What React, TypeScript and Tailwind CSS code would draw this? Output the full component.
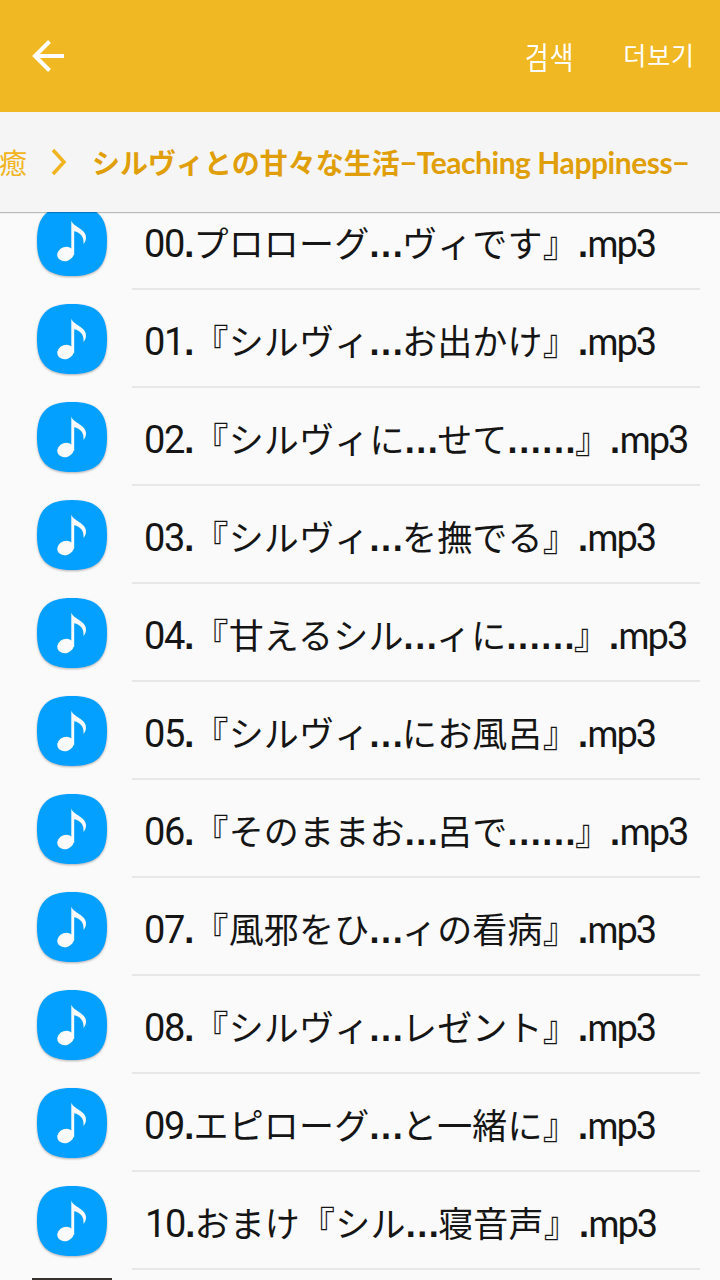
const FILES = [
  '00.プロローグ...ヴィです』.mp3',
  '01.『シルヴィ...お出かけ』.mp3',
  '02.『シルヴィに...せて......』.mp3',
  '03.『シルヴィ...を撫でる』.mp3',
  '04.『甘えるシル...ィに......』.mp3',
  '05.『シルヴィ...にお風呂』.mp3',
  '06.『そのままお...呂で......』.mp3',
  '07.『風邪をひ...ィの看病』.mp3',
  '08.『シルヴィ...レゼント』.mp3',
  '09.エピローグ...と一緒に』.mp3',
  '10.おまけ『シル...寝音声』.mp3',
]

// each kind of glyph gets its own face and tracking
function runClass(run: string) {
  if (/^1/.test(run)) return "ml-px font-['Roboto'] text-[38px] tracking-[-1.3px]"
  if (/^\d/.test(run)) return "font-['Roboto'] text-[38px] tracking-[-1.3px]"
  if (/^\./.test(run)) return "-mr-[2.3px] font-['Liberation_Sans'] font-bold text-[36px] tracking-[1.6px]"
  if (/^[a-z]/.test(run)) return "font-['Lato'] text-[38px] tracking-[-2px]"
  return "font-['Noto_Sans_CJK_JP'] text-[35px] tracking-[0.2px]"
}

function FileName({ name }: { name: string }) {
  const runs = name.match(/\d+|\.+|[a-z]+|[^\d.a-z]+/g) ?? []
  return (
    <p className="flex items-baseline whitespace-pre leading-none text-[#151515]">
      {runs.map((run, i) => (
        <span key={i} className={runClass(run)}>{run}</span>
      ))}
    </p>
  )
}

function MusicIcon() {
  return (
    <svg className="ml-9 shrink-0 overflow-visible drop-shadow-[0_1px_1px_rgba(0,0,0,0.3)]" width="72" height="72" viewBox="0 0 72 72">
      <path d="M36 1C61 1 71 11 71 36S61 71 36 71 1 61 1 36 11 1 36 1Z" fill="#03a0ff" />
      <g fill="#fafafa">
        <ellipse cx="29.6" cy="49" rx="8.5" ry="7" transform="rotate(-18 29.6 49)" />
        <path d="M35.3 15.500c1.800 6.500 14.700 8.500 14.700 16.700 0 2.800-.9 5-2.500 6.700.7-7.200-3.300-11.500-9.300-12.700v23.500h-2.900Z" />
      </g>
    </svg>
  )
}

function FileRow({ name }: { name: string }) {
  return (
    <li className="flex h-[98px] shrink-0">
      <div className="flex items-center pb-[1px]">
        <MusicIcon />
      </div>
      <div className="ml-6 flex w-[568px] items-center border-b-2 border-[#e7e7e7] pt-[5px] pl-3">
        <FileName name={name} />
      </div>
    </li>
  )
}

export default function App() {
  return (
    <div className="flex h-[1280px] w-[720px] flex-col overflow-hidden bg-[#fafafa] font-['Noto_Sans_CJK_KR',sans-serif]">
      <header className="flex h-28 shrink-0 items-center justify-between bg-[#f0b823] pr-[25px] pl-8 text-white">
        <svg width="32" height="32" viewBox="0 0 32 32" fill="none" stroke="currentColor" strokeWidth="4">
          <path d="M17.500 1.500 3 16l14.500 14.500M3 16h29" />
        </svg>
        <div className="flex items-center gap-[49px] leading-none">
          <button className="origin-center scale-y-[1.18] text-[26px] tracking-[0.8px]">검색</button>
          <button className="-mt-[3px] text-[25px] tracking-[0.9px]">더보기</button>
        </div>
      </header>

      <nav className="relative z-10 flex h-[100px] shrink-0 items-center bg-[#f5f5f5] shadow-[0_1px_1px_rgba(0,0,0,0.25)]">
        <span className="-ml-px font-['Noto_Sans_CJK_JP'] text-[28px] text-[#f0b420]">癒</span>
        <svg className="ml-6" width="16" height="28" viewBox="0 0 16 28" fill="none" stroke="#f0b420" strokeWidth="3.500">
          <path d="m2 2 11 12L2 26" />
        </svg>
        <p className="ml-[25px] flex items-baseline whitespace-pre leading-none text-[#e09f08]">
          <span className="font-['Noto_Sans_CJK_JP'] text-[28px] font-bold">シルヴィとの甘々な生活</span>
          <span className="font-['Lato'] text-[30px] font-bold tracking-[-0.45px]">−Teaching Happiness−</span>
        </p>
      </nav>

      <ul className="-mt-5 flex shrink-0 flex-col">
        {FILES.map(name => <FileRow key={name} name={name} />)}
      </ul>
      <div className="mt-2 ml-8 h-10 w-20 shrink-0 bg-[#37322e]" />
    </div>
  )
}
